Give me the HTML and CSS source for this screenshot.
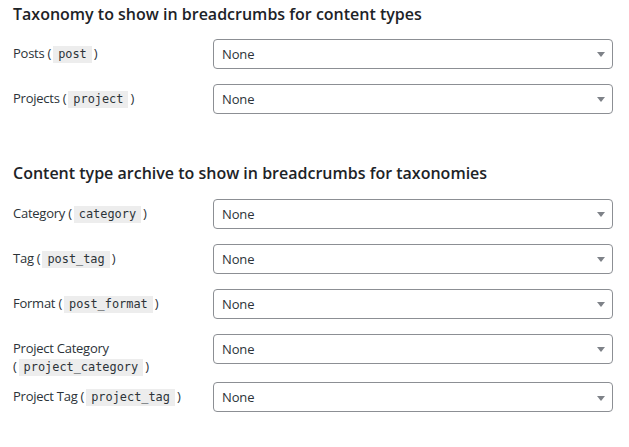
FILE: index.html
```html
<!DOCTYPE html>
<html lang="en">
<head>
<meta charset="utf-8">
<title>Breadcrumb settings</title>
<link rel="stylesheet" href="styles.css">
</head>
<body>
<div class="page">
  <section class="group">
    <h2 class="group-title">Taxonomy to show in breadcrumbs for content types</h2>
    <div class="rows">
      <div class="row">
        <div class="label">Posts <span class="arg">(<code>post</code>)</span></div>
        <div class="field"><div class="select"><span class="value">None</span><svg class="arrow" width="8" height="5" viewBox="0 0 8 5"><path d="M0 0H8L4 5Z"/></svg></div></div>
      </div>
      <div class="row">
        <div class="label">Projects <span class="arg">(<code>project</code>)</span></div>
        <div class="field"><div class="select"><span class="value">None</span><svg class="arrow" width="8" height="5" viewBox="0 0 8 5"><path d="M0 0H8L4 5Z"/></svg></div></div>
      </div>
    </div>
  </section>
  <section class="group group-second">
    <h2 class="group-title">Content type archive to show in breadcrumbs for taxonomies</h2>
    <div class="rows">
      <div class="row">
        <div class="label">Category <span class="arg">(<code>category</code>)</span></div>
        <div class="field"><div class="select"><span class="value">None</span><svg class="arrow" width="8" height="5" viewBox="0 0 8 5"><path d="M0 0H8L4 5Z"/></svg></div></div>
      </div>
      <div class="row">
        <div class="label">Tag <span class="arg">(<code>post_tag</code>)</span></div>
        <div class="field"><div class="select"><span class="value">None</span><svg class="arrow" width="8" height="5" viewBox="0 0 8 5"><path d="M0 0H8L4 5Z"/></svg></div></div>
      </div>
      <div class="row">
        <div class="label">Format <span class="arg">(<code>post_format</code>)</span></div>
        <div class="field"><div class="select"><span class="value">None</span><svg class="arrow" width="8" height="5" viewBox="0 0 8 5"><path d="M0 0H8L4 5Z"/></svg></div></div>
      </div>
      <div class="row">
        <div class="label">Project Category <span class="arg">(<code>project_category</code>)</span></div>
        <div class="field"><div class="select"><span class="value">None</span><svg class="arrow" width="8" height="5" viewBox="0 0 8 5"><path d="M0 0H8L4 5Z"/></svg></div></div>
      </div>
      <div class="row">
        <div class="label">Project Tag <span class="arg">(<code>project_tag</code>)</span></div>
        <div class="field"><div class="select"><span class="value">None</span><svg class="arrow" width="8" height="5" viewBox="0 0 8 5"><path d="M0 0H8L4 5Z"/></svg></div></div>
      </div>
    </div>
  </section>
</div>
</body>
</html>
```

FILE: styles.css
```css
html, body {
  margin: 0;
  padding: 0;
  background: #ffffff;
}

body {
  font-family: "Open Sans", "Noto Sans", "Liberation Sans", sans-serif;
  color: #1d2327;
  font-size: 13px;
  line-height: 18px;
}

.page {
  padding: 3px 0 0 13px;
}

.group-title {
  margin: 0 0 6px;
  font-size: 16px;
  line-height: 22px;
  font-weight: 600;
  color: #1d2327;
}

.group-second {
  margin-top: 41px;
}

.group-second .group-title {
  margin-bottom: 7px;
}

.row {
  display: flex;
  align-items: flex-start;
}

.label {
  width: 200px;
  flex: none;
  padding-top: 12.5px;
  padding-right: 10px;
  box-sizing: border-box;
  color: #2c3338;
  letter-spacing: -0.25px;
}

.arg {
  white-space: nowrap;
}

.label code {
  font-family: "DejaVu Sans Mono", "Liberation Mono", monospace;
  font-size: 11.9px;
  line-height: 14px;
  letter-spacing: 0;
  padding: 1px 5px 2px;
  margin: 0 2px;
  background: rgba(0, 0, 0, 0.07);
  color: #2c3338;
}

.field {
  padding: 7.5px 0;
}

.select {
  box-sizing: border-box;
  width: 400px;
  height: 30px;
  border: 1px solid #8c8f94;
  border-radius: 4px;
  background: #fff;
  display: flex;
  align-items: center;
  justify-content: space-between;
  padding: 0 7px 0 8px;
  color: #2c3338;
  letter-spacing: -0.15px;
}

.arrow {
  fill: #7e8288;
  margin-top: 2px;
}
```
